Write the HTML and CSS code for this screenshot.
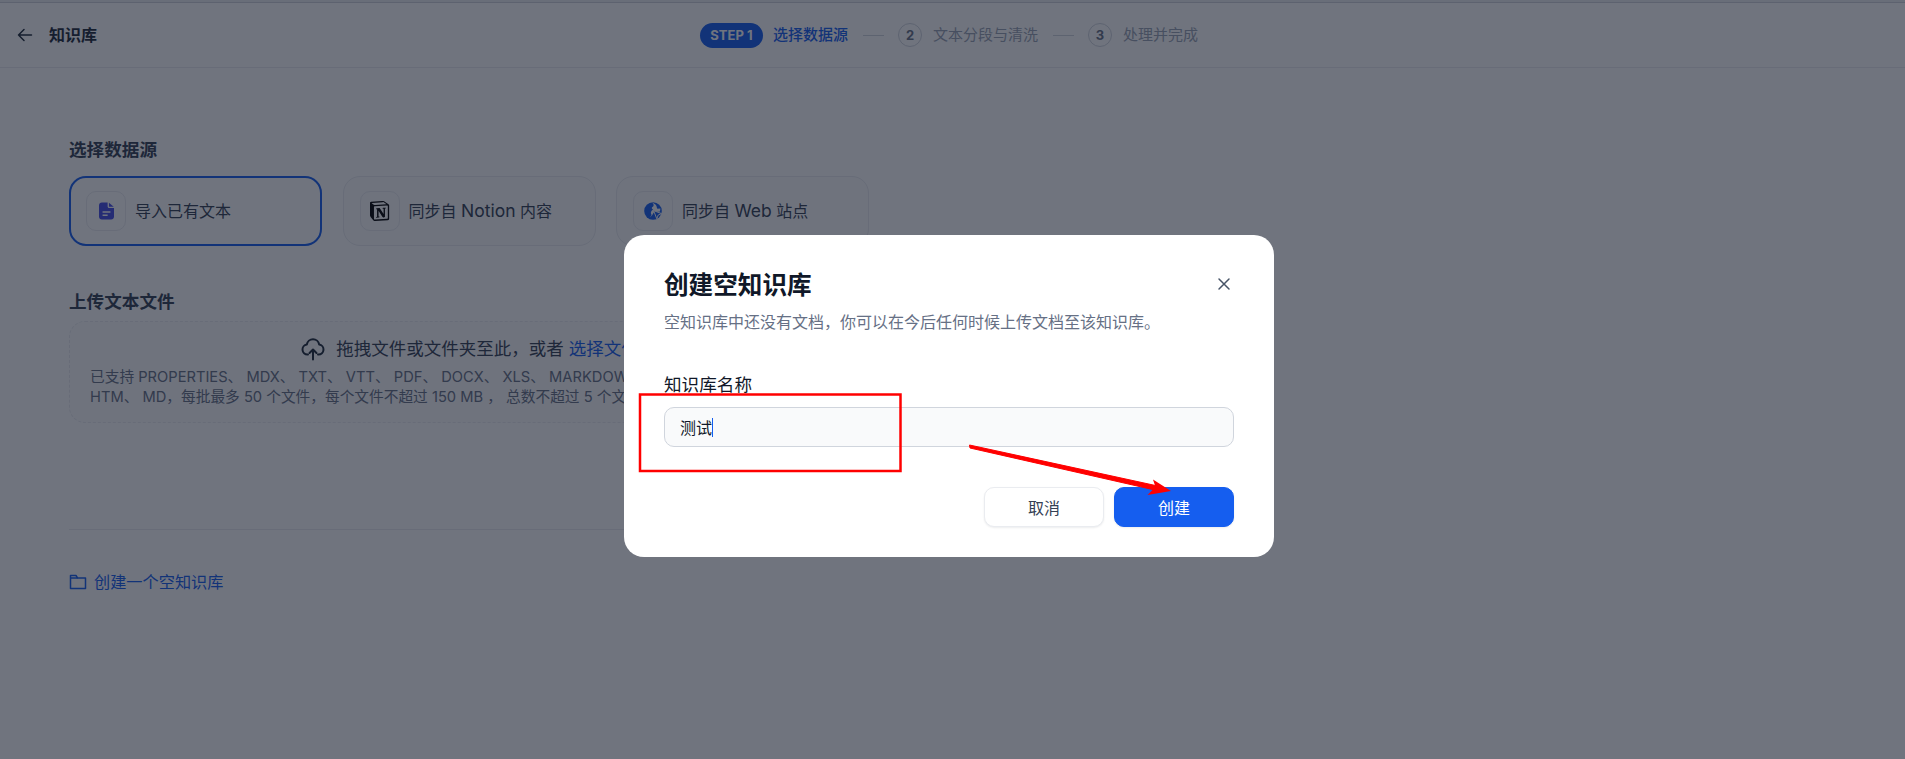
FILE: index.html
```html
<!DOCTYPE html>
<html lang="zh-CN">
<head>
<meta charset="utf-8">
<title>知识库</title>
<link rel="stylesheet" href="styles.css">
</head>
<body>
<div class="page">
  <div class="strip"></div>
  <header class="header">
    <div class="back">
      <svg class="back-icon" viewBox="0 0 16 16" fill="none" stroke="currentColor" stroke-width="1.5" stroke-linecap="round" stroke-linejoin="round"><path d="M14.500 8H1.500M7 2.500 1.500 8 7 13.500"/></svg>
      <span class="back-title">知识库</span>
    </div>
    <nav class="stepper">
      <span class="step-pill">STEP 1</span>
      <span class="step-label step-label-active">选择数据源</span>
      <span class="step-dash"></span>
      <span class="step-num">2</span>
      <span class="step-label">文本分段与清洗</span>
      <span class="step-dash"></span>
      <span class="step-num">3</span>
      <span class="step-label">处理并完成</span>
    </nav>
    <div></div>
  </header>
  <main class="main">
    <h2 class="section-title first">选择数据源</h2>
    <div class="sources">
      <div class="source source-active">
        <span class="source-icon">
          <svg class="icon-doc" viewBox="0 0 16 18"><path fill="#444ce7" d="M3 0h6.200v4.200c0 .9.700 1.600 1.600 1.600H16V15c0 1.700-1.300 3-3 3H3c-1.700 0-3-1.300-3-3V3c0-1.700 1.300-3 3-3z"/><path fill="#444ce7" d="M10.600.3 15.700 4.500h-5.100z"/><path fill="#fff" d="M3.800 9.200h8.400v1.600H3.800zM3.800 12.600h5.400v1.600H3.800z"/></svg>
        </span>
        <span class="source-label">导入已有文本</span>
      </div>
      <div class="source">
        <span class="source-icon">
          <svg class="icon-notion" viewBox="0 0 100 100"><path fill="#fff" d="M6.017 4.313l55.333-4.087c6.797-.583 8.543-.19 12.817 2.917l17.663 12.443c2.913 2.14 3.883 2.723 3.883 5.053v68.243c0 4.277-1.553 6.807-6.99 7.193L24.467 99.967c-4.08.193-6.023-.39-8.16-3.113L3.3 79.94C.967 76.827 0 74.497 0 71.773V11.113c0-3.497 1.553-6.413 6.017-6.8z"/><path fill="#000" fill-rule="evenodd" d="M61.35.227 6.017 4.314C1.553 4.7 0 7.617 0 11.113v60.66c0 2.723.967 5.053 3.3 8.167l13.007 16.913c2.137 2.723 4.08 3.307 8.16 3.113l64.257-3.89c5.433-.387 6.99-2.917 6.99-7.193V20.64c0-2.21-.873-2.847-3.443-4.733L74.167 3.143C69.894.036 68.147-.357 61.35.226zM25.92 19.523c-5.247.353-6.437.433-9.417-1.99L8.927 11.507c-.77-.78-.383-1.753 1.557-1.947l53.193-3.887c4.467-.39 6.793 1.167 8.54 2.527l9.123 6.61c.39.197 1.36 1.36.193 1.36l-54.933 3.307-.68.047zM19.803 88.3V30.367c0-2.53.777-3.697 3.103-3.893L86 22.78c2.14-.193 3.107 1.167 3.107 3.693v57.547c0 2.53-.39 4.67-3.883 4.863l-60.377 3.5c-3.493.193-5.043-.97-5.043-4.083zm59.6-54.827c.387 1.75 0 3.5-1.75 3.7l-2.91.577v42.773c-2.527 1.36-4.853 2.137-6.797 2.137-3.107 0-3.883-.973-6.21-3.887l-19.03-29.94v28.967l6.02 1.363s0 3.5-4.857 3.5l-13.39.777c-.39-.78 0-2.723 1.357-3.11l3.497-.97v-38.3L30.48 40.667c-.39-1.75.58-4.277 3.3-4.473l14.367-.967 19.8 30.327v-26.83l-5.047-.58c-.39-2.143 1.163-3.7 3.103-3.89l13.4-.78z"/></svg>
        </span>
        <span class="source-label">同步自 <span class="latin">Notion</span> 内容</span>
      </div>
      <div class="source">
        <span class="source-icon">
          <svg class="icon-globe" viewBox="0 0 18 18"><circle cx="9" cy="9" r="8.800" fill="#155eef"/><path fill="#fff" d="M7.600.6c1.400.8 2.200 1.700 2 2.800-.2 1-1.300 1.300-1.700 2.200-.4 1 .4 1.900 1.300 2.200-1 .3-1.800 1.100-2.200 2.200-.4 1.200.2 2.100.6 3-.4.900-1.100 1.800-2 2.400 1-.2 2.200-1.500 3-2.800.5-1 .8-1.800 1.500-2.300L16 9.600l.4-3-3 .2c-.7-.9-.6-2.200-1.200-3.200C11.500 2.300 9.600 1 7.600.6z"/><path fill="#155eef" stroke="#fff" stroke-width="1" d="M9.600 8.600 17.600 11.600 14.200 13 12.800 16.800z"/></svg>
        </span>
        <span class="source-label">同步自 <span class="latin">Web</span> 站点</span>
      </div>
    </div>
    <h2 class="section-title second">上传文本文件</h2>
    <div class="dropzone">
      <div class="drop-line">
        <svg class="icon-cloud" viewBox="0 0 24 24" fill="none" stroke="currentColor" stroke-width="2" stroke-linecap="round" stroke-linejoin="round"><path d="M7 17.500H6.500a5 5 0 0 1-.7-9.950 6.300 6.300 0 0 1 12.400 0 5 5 0 0 1-.7 9.950H17"/><path d="M12 22.500V12.500M8.500 16 12 12.500 15.500 16"/></svg>
        <span>拖拽文件或文件夹至此&#65292;或者 <a class="link">选择文件</a></span>
      </div>
      <p class="drop-desc">已支持 PROPERTIES、 MDX、 TXT、 VTT、 PDF、 DOCX、 XLS、 MARKDOWN、 XLSX、 HTML、 CSV、<br>HTM、 MD&#65292;每批最多 50 个文件&#65292;每个文件不超过 150 MB &#65292; 总数不超过 5 个文件。</p>
    </div>
    <div class="divider"></div>
    <a class="empty-link">
      <svg class="icon-folder" viewBox="0 0 18 18" fill="none" stroke="currentColor" stroke-width="1.500" stroke-linejoin="round"><path d="M1.500 2.500h5.500l1.500 2.500h8v10.500H1.500z"/><path d="M1.500 5h7"/></svg>
      <span>创建一个空知识库</span>
    </a>
  </main>
</div>

<div class="overlay"></div>
<section class="modal">
  <h1 class="modal-title">创建空知识库</h1>
  <p class="modal-sub">空知识库中还没有文档&#65292;你可以在今后任何时候上传文档至该知识库。</p>
  <label class="field-label" for="kb-name">知识库名称</label>
  <div class="field">
    <input class="field-input" id="kb-name" value="测试">
    <span class="caret"></span>
  </div>
  <div class="actions">
    <button class="btn">取消</button>
    <button class="btn btn-primary">创建</button>
  </div>
  <svg class="modal-close" viewBox="0 0 14 14" fill="none" stroke="currentColor" stroke-width="1.500" stroke-linecap="round"><path d="M2 2l10 10M12 2 2 12"/></svg>
</section>

<svg class="annotations" viewBox="0 0 1905 759">
  <rect x="640" y="394.500" width="260.500" height="76.500" fill="none" stroke="#ff0000" stroke-width="2.500"/>
  <path d="M969.500 445 970 448 1157 490.500 1157.800 486z" fill="#ff0000" stroke="#ff0000" stroke-width="1" stroke-linejoin="round"/>
  <path d="M1171 491 1153 479.500 1155.500 487 1147.500 495z" fill="#ff0000"/>
</svg>
</body>
</html>
```

FILE: styles.css
```css
* { box-sizing: border-box; }

html, body {
  margin: 0;
  height: 100%;
  overflow: hidden;
  background: #fff;
}

body {
  font-family: Inter, "Noto Sans CJK SC", sans-serif;
  color: #1d2939;
}

.page {
  height: 759px;
}

.strip {
  height: 3px;
  background: #eef0f3;
  border-bottom: 1px solid #cfd3da;
}

.header {
  display: grid;
  grid-template-columns: 1fr auto 1fr;
  align-items: center;
  height: 65px;
  padding: 0 24px 0 17px;
  border-bottom: 1px solid #eaecf0;
}

.back {
  display: flex;
  align-items: center;
  gap: 16px;
}

.back-icon {
  width: 16px;
  height: 16px;
  color: #1d2939;
}

.back-title {
  font-size: 16px;
  font-weight: 600;
  line-height: 24px;
}

.stepper {
  display: flex;
  align-items: center;
}

.step-pill {
  width: 63px;
  height: 25px;
  margin-right: 10px;
  border-radius: 13px;
  background: #155eef;
  color: #fff;
  font-size: 13px;
  font-weight: 700;
  line-height: 25px;
  text-align: center;
}

.step-label {
  font-size: 15px;
  line-height: 24px;
  color: #98a2b3;
}

.step-label-active {
  color: #155eef;
  font-weight: 500;
}

.step-dash {
  width: 21px;
  height: 1px;
  margin: 0 14px 0 15px;
  background: #d0d5dd;
}

.step-num {
  width: 24px;
  height: 24px;
  margin-right: 11px;
  border: 1px solid #d0d5dd;
  border-radius: 50%;
  color: #667085;
  font-size: 13px;
  font-weight: 700;
  line-height: 22px;
  text-align: center;
}

.main {
  width: 871px;
  padding-left: 69px;
}

.section-title {
  margin: 0;
  font-size: 17.600px;
  font-weight: 700;
  line-height: 24px;
  color: #344054;
}

.section-title.first { margin-top: 70px; }
.section-title.second { margin-top: 44px; }

.sources {
  display: flex;
  gap: 20.500px;
  margin-top: 14px;
}

.source {
  display: flex;
  align-items: center;
  gap: 9px;
  width: 253px;
  height: 70px;
  padding-left: 16px;
  border: 1px solid #eaecf0;
  border-radius: 17px;
  background: #fcfcfd;
}

.source-active {
  border: 2px solid #155eef;
  padding-left: 15px;
  background: #fff;
}

.source-icon {
  display: flex;
  align-items: center;
  justify-content: center;
  flex: none;
  width: 40px;
  height: 40px;
  border: 1px solid #eaecf0;
  border-radius: 10px;
}

.source-label {
  font-size: 16px;
  line-height: 24px;
  color: #344054;
}

.latin { font-size: 17.500px; }

.icon-doc { width: 15px; height: 18px; }
.icon-notion { width: 20px; height: 20px; }
.icon-globe { width: 18px; height: 18px; }

.dropzone {
  height: 102px;
  margin-top: 7px;
  padding: 15px 20px 0;
  border: 1px dashed #eaecf0;
  border-radius: 16px;
  background: #fcfcfd;
}

.drop-line {
  display: flex;
  align-items: center;
  justify-content: center;
  gap: 11px;
  font-size: 17.500px;
  line-height: 24px;
  color: #344054;
}

.icon-cloud {
  width: 24px;
  height: 24px;
  color: #1d2939;
}

.link { color: #155eef; }

.drop-desc {
  margin: 6px 0 0;
  font-size: 14.700px;
  line-height: 20px;
  white-space: nowrap;
  color: #667085;
}

.divider {
  height: 1px;
  margin-top: 106px;
  background: #eaecf0;
}

.empty-link {
  display: flex;
  align-items: center;
  gap: 7px;
  margin-top: 40px;
  color: #155eef;
  font-size: 16.200px;
  line-height: 24px;
}

.icon-folder { width: 18px; height: 18px; }

.overlay {
  position: fixed;
  inset: 0;
  background: rgba(16, 24, 40, 0.6);
}

.modal {
  position: fixed;
  left: 624px;
  top: 235px;
  width: 650px;
  height: 322px;
  padding: 34px 40px 30px;
  border-radius: 20px;
  background: #fff;
}

.modal-title {
  margin: 0;
  font-size: 24.600px;
  font-weight: 700;
  line-height: 32px;
  color: #101828;
}

.modal-sub {
  margin: 9px 0 0;
  font-size: 16px;
  line-height: 24px;
  color: #667085;
}

.field-label {
  display: block;
  margin-top: 39px;
  font-size: 17.600px;
  line-height: 24px;
  color: #101828;
}

.field {
  position: relative;
  margin-top: 10px;
}

.field-input {
  display: block;
  width: 100%;
  height: 40px;
  padding: 0 15px;
  border: 1px solid #d0d5dd;
  border-radius: 10px;
  background: #f9fafb;
  color: #101828;
  font: inherit;
  font-size: 16px;
}

.caret {
  position: absolute;
  left: 48px;
  top: 11px;
  width: 1px;
  height: 19px;
  background: #155eef;
}

.actions {
  display: flex;
  justify-content: flex-end;
  gap: 10px;
  margin-top: 40px;
}

.btn {
  width: 120px;
  height: 40px;
  padding: 0;
  border: 1px solid #eaecf0;
  border-radius: 10px;
  background: #fff;
  box-shadow: 0 1px 2px rgba(16, 24, 40, 0.08);
  color: #344054;
  font: inherit;
  font-size: 16px;
}

.btn-primary {
  border-color: #155eef;
  background: #155eef;
  color: #fff;
}

.modal-close {
  position: absolute;
  right: 43px;
  top: 42px;
  width: 14px;
  height: 14px;
  color: #475467;
}

.annotations {
  position: fixed;
  left: 0;
  top: 0;
  width: 1905px;
  height: 759px;
  pointer-events: none;
}
```
